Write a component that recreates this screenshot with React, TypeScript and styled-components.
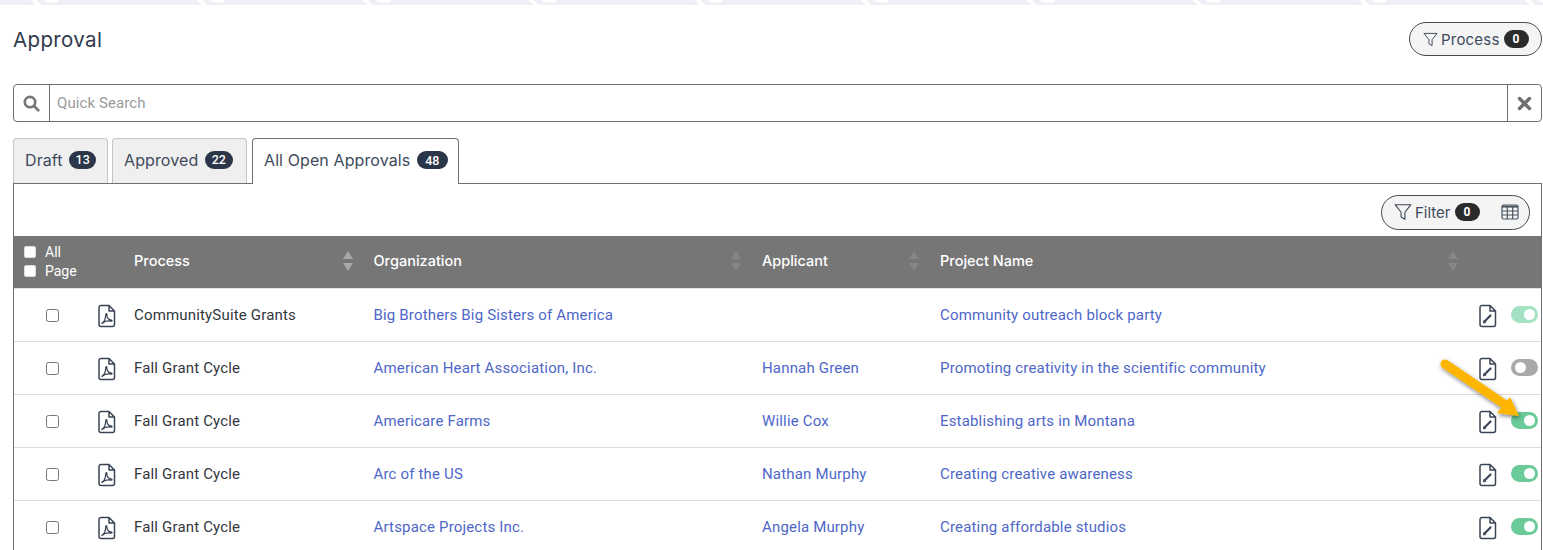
import React from "react";
import styled, { createGlobalStyle } from "styled-components";

const Global = createGlobalStyle`
  html, body { margin: 0; padding: 0; background: #fff; overflow: hidden; height: 550px; }
  body { font-family: "Roboto", "Liberation Sans", sans-serif; color: #2f3542; }
  * { box-sizing: border-box; }
`;
const HEAD = `"Inter", "Open Sans", "Liberation Sans", sans-serif`;
const COLS = "120px 239.5px 388.5px 178px 1fr";

const Page = styled.div`position: relative; width: 1543px; height: 550px; overflow: hidden;`;
const TopStripe = styled.svg`display: block; width: 100%; height: 5px;`;
const Content = styled.div`padding: 17px 1px 0 13px;`;
const TitleRow = styled.div`display: flex; justify-content: space-between; align-items: center; height: 34px;`;
const Title = styled.h1`margin: 1px 0 0; font: 400 20.5px ${HEAD}; color: #2f3a4a; letter-spacing: 0.35px;`;
const Pill = styled.div<{ $w: number; $h: number }>`
  width: ${p => p.$w}px; height: ${p => p.$h}px; display: flex; align-items: center;
  border: 1px solid #4a4a4a; border-radius: 18px; background: #f4f4f4;
  font: 400 15px ${HEAD}; color: #3d4a5c;
`;
const ProcessPill = styled(Pill)`padding-left: 13px; gap: 3px; letter-spacing: 0.2px;`;
const FilterPill = styled(Pill)`padding-left: 12px; gap: 3px; margin-left: auto;`;
const Count = styled.span`
  min-width: 25px; height: 18px; padding: 0 6px; border-radius: 9px; background: #2b2b2b; color: #fff;
  display: inline-flex; align-items: center; justify-content: center; font: 700 12px "Roboto", sans-serif; margin-left: 1px;
`;
const Search = styled.div`
  margin-top: 28px; height: 38px; display: flex; border: 1px solid #6f6f6f; border-radius: 4px; align-items: stretch;
`;
const SearchIcon = styled.div<{ $w: number }>`
  width: ${p => p.$w}px; display: flex; align-items: center; justify-content: center;
`;
const SearchInput = styled.div`
  flex: 1; border-left: 1px solid #6f6f6f; border-right: 1px solid #6f6f6f; padding-left: 7px;
  display: flex; align-items: center; color: #9a9a9a; font-size: 15px; letter-spacing: 0.1px;
`;
const Tabs = styled.div`margin-top: 16px; display: flex; align-items: flex-start; height: 45px; position: relative; z-index: 1;`;
const Tab = styled.div<{ $active?: boolean; $w: number; $ml: number }>`
  width: ${p => p.$w}px; margin-left: ${p => p.$ml}px; height: ${p => p.$active ? 46 : 45}px;
  border: 1px solid ${p => p.$active ? "#6f6f6f" : "#c4c4c4"}; border-bottom: none;
  border-radius: 4px 4px 0 0; background: ${p => p.$active ? "#fff" : "#efefef"};
  display: flex; align-items: center; gap: 6.5px; padding-left: 11px; padding-bottom: 3px;
  font: 400 16px ${HEAD}; letter-spacing: 0.1px; color: #3d4a5c; white-space: nowrap;
`;
const TabCount = styled.span<{ $w: number }>`
  height: 18px; width: ${p => p.$w}px; border-radius: 9px; background: #2b3648; color: #fff;
  display: inline-flex; align-items: center; justify-content: center; font: 500 12.5px "Roboto", sans-serif; letter-spacing: 0;
`;
const Panel = styled.div`border: 1px solid #6f6f6f; height: 400px;`;
const PanelBar = styled.div`height: 52px; display: flex; align-items: center; padding: 4px 11px 0 0;`;
const GridIcon = styled.span`margin-left: auto; margin-right: 10px; display: inline-flex;`;
const HeadRow = styled.div`
  display: grid; grid-template-columns: ${COLS}; height: 53px; background: #767676; color: #fff;
  align-items: center; font: 500 14.5px ${HEAD}; border-bottom: 1px solid #e2e2e2;
`;
const Row = styled.div`
  display: grid; grid-template-columns: ${COLS}; height: 53px; align-items: center;
  border-bottom: 1px solid #dcdcdc; font-size: 15px; letter-spacing: 0.17px; color: #33363d;
`;
const AllCell = styled.div`display: grid; grid-template-columns: 13px auto; gap: 3px 8px; padding-left: 10px; align-items: center; font: 400 14px "Roboto", sans-serif; position: relative; top: -1px;`;
const WhiteBox = styled.span`width: 12px; height: 12px; background: #fff; border-radius: 2px; border: 1px solid #ddd;`;
const HeadCell = styled.div`position: relative; height: 100%; display: flex; align-items: center; padding: 0 18px 4px 0;`;
const SortWrap = styled.span<{ $c: string; $r: number }>`color: ${p => p.$c}; position: absolute; right: ${p => p.$r}px; top: 15px; display: inline-flex;`;
const LeadCell = styled.div`display: flex; align-items: center; padding-left: 32px; gap: 39px;`;
const Box = styled.span`width: 13px; height: 13px; border: 1px solid #767676; border-radius: 2.5px; background: #fff;`;
const DocWrap = styled.span`display: inline-flex; position: relative; top: 1px;`;
const Link = styled.span`color: #4e67c8;`;
const ProjectLink = styled(Link)`margin-right: auto;`;
const Actions = styled.div`display: flex; align-items: center; justify-content: flex-end; gap: 14px; padding-right: 3px;`;
const Toggle = styled.span<{ $c: string; $off?: boolean }>`
  width: 27px; height: 17px; border-radius: 9px; background: ${p => p.$c}; position: relative; top: -1px; display: inline-block;
  &::after { content: ""; position: absolute; top: 3px; width: 11px; height: 11px; border-radius: 50%; background: #fff;
    ${p => p.$off ? "left: 4px;" : "right: 3px;"} }
`;
const Arrow = styled.svg`position: absolute; left: 1425px; top: 345px; pointer-events: none;`;

const Funnel = ({ s = 15 }: { s?: number }) => (
  <svg width={s} height={s} viewBox="0 0 16 16" fill="none" stroke="#3a4656" strokeWidth="1" strokeLinejoin="round">
    <path d="M1 1.5h14L9.7 8.2v6.3l-3.4-2V8.2z" />
  </svg>
);
const SortIcon = () => (
  <svg width="10" height="20" viewBox="0 0 10 20" fill="currentColor"><path d="M5 0l5 8H0zM5 20L0 12h10z" /></svg>
);
const PdfIcon = () => (
  <svg width="18" height="24" viewBox="0 0 18 24" fill="none" stroke="#3a4454" strokeWidth="1.5" strokeLinejoin="round">
    <path d="M3 1.500h8l5.500 5.500v13.500a2 2 0 0 1-2 2H3a2 2 0 0 1-2-2V3.500a2 2 0 0 1 2-2zM11 1.500V7h5.500" />
    <path strokeWidth="1.200" d="M4 19c2-1 3.600-4.500 3.800-8.500 0-1.300 1.200-1.100 1.100.2-.3 3 1.800 5.300 4.600 5.500.9.100.7 1.100-.3.900-3-.4-6.600-.3-8.600 2.100-.5.500-.9.100-.6-.2z" />
  </svg>
);
const EditDoc = () => (
  <svg width="18" height="24" viewBox="0 0 18 24" fill="none" stroke="#3a4454" strokeWidth="1.500" strokeLinejoin="round">
    <path d="M3 1.500h8l5.500 5.500v13.500a2 2 0 0 1-2 2H3a2 2 0 0 1-2-2V3.500a2 2 0 0 1 2-2zM11 1.500V7h5.500" />
    <path strokeWidth="2.200" strokeLinecap="round" d="M6 17l5.500-5.500" />
    <path fill="#3a4454" strokeWidth="0.800" d="M4.300 19l.6-2.600 2 2z" />
  </svg>
);

const rows = [
  ["CommunitySuite Grants", "Big Brothers Big Sisters of America", "", "Community outreach block party", "#a3e2c2", false],
  ["Fall Grant Cycle", "American Heart Association, Inc.", "Hannah Green", "Promoting creativity in the scientific community", "#a9a9a9", true],
  ["Fall Grant Cycle", "Americare Farms", "Willie Cox", "Establishing arts in Montana", "#6bcb98", false],
  ["Fall Grant Cycle", "Arc of the US", "Nathan Murphy", "Creating creative awareness", "#6bcb98", false],
  ["Fall Grant Cycle", "Artspace Projects Inc.", "Angela Murphy", "Creating affordable studios", "#6bcb98", false],
] as const;

export default function App() {
  return (
    <Page>
      <Global />
      <TopStripe>
        <defs>
          <pattern id="stripe" width="166" height="5" patternUnits="userSpaceOnUse">
            <rect width="166" height="5" fill="#eef0f6" />
            <path d="M30 0h6l5 5h-5zM45 0h14l-3 3-11-1z" fill="#fff" />
          </pattern>
        </defs>
        <rect width="100%" height="5" fill="url(#stripe)" />
      </TopStripe>
      <Content>
        <TitleRow>
          <Title>Approval</Title>
          <ProcessPill $w={133} $h={34}><Funnel />Process<Count>0</Count></ProcessPill>
        </TitleRow>
        <Search>
          <SearchIcon $w={35}>
            <svg width="17" height="17" viewBox="0 0 16 16" fill="none" stroke="#777" strokeWidth="2.500" strokeLinecap="round">
              <circle cx="6.600" cy="6.600" r="4.900" /><path d="M10.400 10.400l4 4" />
            </svg>
          </SearchIcon>
          <SearchInput>Quick Search</SearchInput>
          <SearchIcon $w={33}>
            <svg width="15" height="15" viewBox="0 0 15 15" stroke="#6f6f6f" strokeWidth="3.400" strokeLinecap="round">
              <path d="M2.500 2.500l10 10M12.500 2.500l-10 10" />
            </svg>
          </SearchIcon>
        </Search>
        <Tabs>
          <Tab $w={95} $ml={0}>Draft<TabCount $w={27}>13</TabCount></Tab>
          <Tab $w={135} $ml={4}>Approved<TabCount $w={28}>22</TabCount></Tab>
          <Tab $w={207} $ml={5} $active>All Open Approvals<TabCount $w={31}>48</TabCount></Tab>
        </Tabs>
        <Panel>
          <PanelBar>
            <FilterPill $w={149} $h={35}>
              <Funnel s={18} />Filter<Count>0</Count>
              <GridIcon>
                <svg width="18" height="16" viewBox="0 0 18 16" fill="none" stroke="#4b5563" strokeWidth="1.200">
                  <rect x="1" y="1" width="16" height="14" rx="1.500" />
                  <path strokeWidth="2" d="M1 2.600h16" /><path d="M1 7h16M1 11h16M6.300 3v12M11.700 3v12" />
                </svg>
              </GridIcon>
            </FilterPill>
          </PanelBar>
          <HeadRow>
            <AllCell><WhiteBox />All<WhiteBox />Page</AllCell>
            <HeadCell>Process<SortWrap $c="#a8a8a8" $r={21}><SortIcon /></SortWrap></HeadCell>
            <HeadCell>Organization<SortWrap $c="#868686" $r={21}><SortIcon /></SortWrap></HeadCell>
            <HeadCell>Applicant<SortWrap $c="#868686" $r={21}><SortIcon /></SortWrap></HeadCell>
            <HeadCell>Project Name<SortWrap $c="#868686" $r={83}><SortIcon /></SortWrap></HeadCell>
          </HeadRow>
          {rows.map((r, i) => (
            <Row key={i}>
              <LeadCell><Box /><DocWrap><PdfIcon /></DocWrap></LeadCell>
              <div>{r[0]}</div>
              <Link>{r[1]}</Link>
              <Link>{r[2]}</Link>
              <Actions>
                <ProjectLink>{r[3]}</ProjectLink>
                <DocWrap><EditDoc /></DocWrap>
                <Toggle $c={r[4]} $off={r[5]} />
              </Actions>
            </Row>
          ))}
        </Panel>
      </Content>
      <Arrow width="105" height="90" viewBox="0 0 105 90" fill="none">
        <defs>
          <filter id="sh" x="-20%" y="-20%" width="150%" height="150%">
            <feDropShadow dx="1" dy="2" stdDeviation="2" floodColor="#000" floodOpacity="0.5" />
          </filter>
        </defs>
        <g filter="url(#sh)">
          <path d="M20 19L82 61" stroke="#fdb500" strokeWidth="9" strokeLinecap="round" />
          <path d="M85 52L94 71L72 68z" fill="#fdb500" />
        </g>
      </Arrow>
    </Page>
  );
}
